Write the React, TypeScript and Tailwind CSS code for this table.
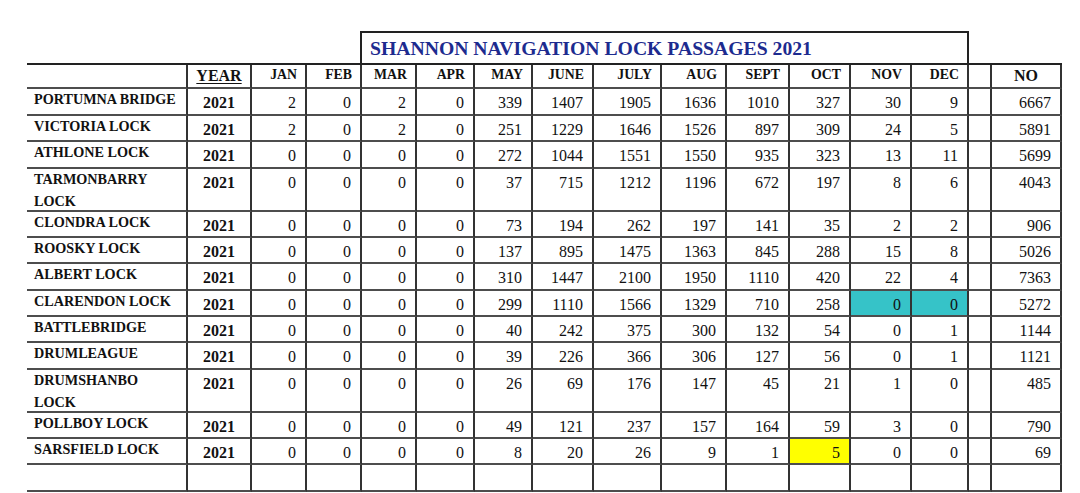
import React from "react";

type Row = { name: string[]; vals: number[]; total: number; hl?: Record<number, string> };

const rows: Row[] = [
  { name: ["PORTUMNA BRIDGE"], vals: [2, 0, 2, 0, 339, 1407, 1905, 1636, 1010, 327, 30, 9], total: 6667 },
  { name: ["VICTORIA LOCK"], vals: [2, 0, 2, 0, 251, 1229, 1646, 1526, 897, 309, 24, 5], total: 5891 },
  { name: ["ATHLONE LOCK"], vals: [0, 0, 0, 0, 272, 1044, 1551, 1550, 935, 323, 13, 11], total: 5699 },
  { name: ["TARMONBARRY", "LOCK"], vals: [0, 0, 0, 0, 37, 715, 1212, 1196, 672, 197, 8, 6], total: 4043 },
  { name: ["CLONDRA LOCK"], vals: [0, 0, 0, 0, 73, 194, 262, 197, 141, 35, 2, 2], total: 906 },
  { name: ["ROOSKY LOCK"], vals: [0, 0, 0, 0, 137, 895, 1475, 1363, 845, 288, 15, 8], total: 5026 },
  { name: ["ALBERT LOCK"], vals: [0, 0, 0, 0, 310, 1447, 2100, 1950, 1110, 420, 22, 4], total: 7363 },
  { name: ["CLARENDON LOCK"], vals: [0, 0, 0, 0, 299, 1110, 1566, 1329, 710, 258, 0, 0], total: 5272, hl: { 10: "teal", 11: "teal" } },
  { name: ["BATTLEBRIDGE"], vals: [0, 0, 0, 0, 40, 242, 375, 300, 132, 54, 0, 1], total: 1144 },
  { name: ["DRUMLEAGUE"], vals: [0, 0, 0, 0, 39, 226, 366, 306, 127, 56, 0, 1], total: 1121 },
  { name: ["DRUMSHANBO", "LOCK"], vals: [0, 0, 0, 0, 26, 69, 176, 147, 45, 21, 1, 0], total: 485 },
  { name: ["POLLBOY LOCK"], vals: [0, 0, 0, 0, 49, 121, 237, 157, 164, 59, 3, 0], total: 790 },
  { name: ["SARSFIELD LOCK"], vals: [0, 0, 0, 0, 8, 20, 26, 9, 1, 5, 0, 0], total: 69, hl: { 9: "yellow" } },
];

const months = ["JAN", "FEB", "MAR", "APR", "MAY", "JUNE", "JULY", "AUG", "SEPT", "OCT", "NOV", "DEC"];

const cell = "border-r-2 border-b-2 border-r-[#333] border-b-[#4d4d4d]";

export default function App() {
  return (
    <div className="w-[1080px] h-[493px] bg-white overflow-hidden font-['Liberation_Serif','Times_New_Roman',serif] text-[#111]">
      <div className="pl-[27px] pt-[31px]">
        <div className="ml-[333px] w-[609px] h-[32px] border-2 border-b-0 border-[#222] pl-[8px] pt-[4px]">
          <span className="text-[19.7px] leading-[22px] font-bold text-[#1d2b8f] whitespace-nowrap">
            SHANNON NAVIGATION LOCK PASSAGES 2021
          </span>
        </div>
        <div className="w-[1035px] border-t-2 border-t-[#222] grid grid-cols-[161px_64px_55px_55px_55px_58px_58px_61px_68px_65px_63px_61px_61px_57px_23px_70px] grid-rows-[24px_27px_26px_27px_43px_26px_26px_27px_26px_26px_27px_43px_26px_26px_27px]">
          {/* header */}
          <div className={cell} />
          <div className={`${cell} text-center text-[16px] leading-[20px] font-bold pt-px`}>
            <span className="underline underline-offset-2 decoration-1">YEAR</span>
          </div>
          {months.map((m) => (
            <div key={m} className={`${cell} text-right pr-[8px] text-[13.8px] leading-[20px] font-bold`}>
              {m}
            </div>
          ))}
          <div className={cell} />
          <div className={`${cell} text-center text-[16px] leading-[20px] font-bold pt-px`}>NO</div>

          {rows.map((r) => (
            <React.Fragment key={r.name.join(" ")}>
              <div className={`${cell} pl-[7px] text-[14.2px] leading-[21.5px] font-bold`}>
                {r.name.map((n, i) => (
                  <div key={i}>{n}</div>
                ))}
              </div>
              <div className={`${cell} text-center text-[16px] leading-[20px] font-bold pt-[4px]`}>2021</div>
              {r.vals.map((v, i) => {
                const h = r.hl?.[i];
                const bg = h === "teal" ? "bg-[#36c3c8]" : h === "yellow" ? "bg-[#ffff00]" : "";
                return (
                  <div key={i} className={`${cell} ${bg} text-right pr-[9px] text-[16px] leading-[20px] pt-[4px]`}>
                    {v}
                  </div>
                );
              })}
              <div className={cell} />
              <div className={`${cell} text-right pr-[9px] text-[16px] leading-[20px] pt-[4px]`}>{r.total}</div>
            </React.Fragment>
          ))}

          {/* empty last row */}
          {Array.from({ length: 16 }).map((_, i) => (
            <div key={i} className={cell} />
          ))}
        </div>
      </div>
    </div>
  );
}
